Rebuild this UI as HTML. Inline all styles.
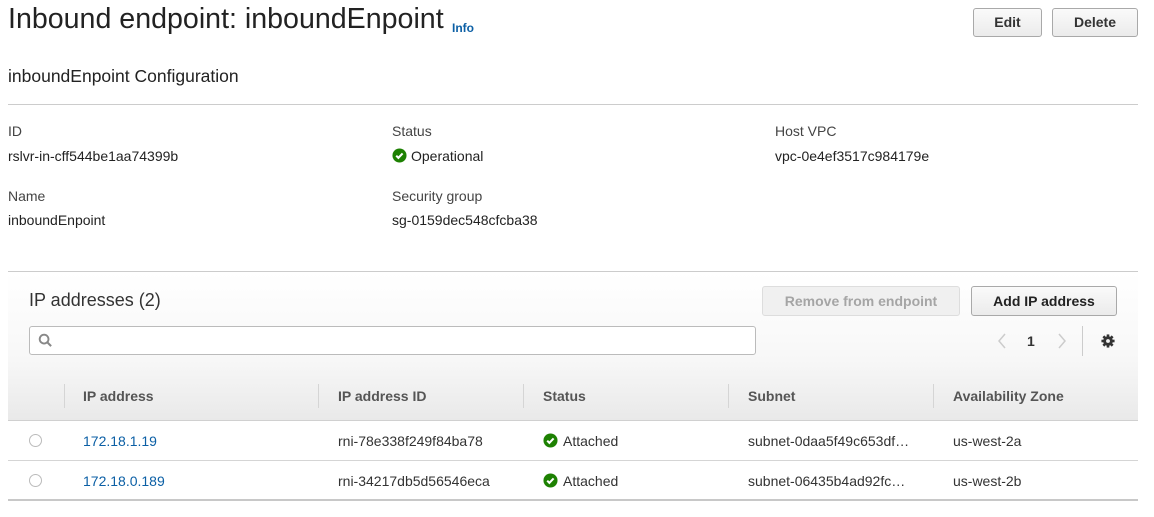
<!DOCTYPE html>
<html><head><style>
*{box-sizing:border-box;margin:0;padding:0}
body{width:1154px;height:517px;background:#fff;font-family:"Liberation Sans",Arial,sans-serif;color:#16191f;position:relative;overflow:hidden}
.a{position:absolute;white-space:nowrap}
.btn{position:absolute;border:1px solid #a9a9a9;border-radius:3px;background:linear-gradient(#fafafa,#ebebeb);font-weight:bold;font-size:14px;color:#333;text-align:center}
.lbl{font-size:14px;color:#444}
.val{font-size:14px;color:#222}
.th{font-size:14px;font-weight:bold;color:#555;top:388px}
.sep{position:absolute;top:384px;width:1px;height:24px;background:#d5d5d5}
.td{font-size:14px;color:#333}
.td.lnk{color:#0b5fa5}
.radio{position:absolute;width:13px;height:13px;border:1px solid #bbb;border-radius:50%;background:#fff}
</style></head><body>
<div class="a" style="left:8px;top:3px;font-size:28.6px;color:#222">Inbound endpoint: inboundEnpoint</div>
<div class="a" style="left:452px;top:21px;font-size:12px;font-weight:bold;color:#0b5fa5">Info</div>
<div class="btn" style="left:973px;top:8px;width:69px;height:29px;line-height:27px">Edit</div>
<div class="btn" style="left:1052px;top:8px;width:86px;height:29px;line-height:27px">Delete</div>
<div class="a" style="left:8px;top:66px;font-size:17.5px;color:#222">inboundEnpoint Configuration</div>
<div class="a" style="left:8px;top:104px;width:1130px;height:1px;background:#ccc"></div>
<div class="a lbl" style="left:8px;top:123px">ID</div>
<div class="a val" style="left:8px;top:148px">rslvr-in-cff544be1aa74399b</div>
<div class="a lbl" style="left:392px;top:123px">Status</div>
<svg class="a" style="left:392px;top:148px" width="15" height="15" viewBox="0 0 16 16"><circle cx="8" cy="8" r="7.5" fill="#1d8102"/><path d="M4.5 8.2l2.3 2.3 4.5-4.7" stroke="#fff" stroke-width="2.2" fill="none"/></svg>
<div class="a val" style="left:411px;top:148px">Operational</div>
<div class="a lbl" style="left:775px;top:123px">Host VPC</div>
<div class="a val" style="left:775px;top:148px">vpc-0e4ef3517c984179e</div>
<div class="a lbl" style="left:8px;top:188px">Name</div>
<div class="a val" style="left:8px;top:212px">inboundEnpoint</div>
<div class="a lbl" style="left:392px;top:188px">Security group</div>
<div class="a val" style="left:392px;top:212px">sg-0159dec548cfcba38</div>

<div class="a" style="left:8px;top:271px;width:1130px;height:150px;border-top:1px solid #ccc;background:linear-gradient(#fff 0%,#f7f7f7 60%,#e9e9e9 100%);border-bottom:1px solid #d0d0d0"></div>
<div class="a" style="left:29px;top:290px;font-size:18px;color:#333">IP addresses (2)</div>
<div class="btn" style="left:762px;top:286px;width:198px;height:30px;line-height:28px;color:#a5a5a5;border-color:#ddd;background:#f0f0f0">Remove from endpoint</div>
<div class="btn" style="left:971px;top:286px;width:146px;height:30px;line-height:28px;color:#222">Add IP address</div>
<div class="a" style="left:29px;top:326px;width:727px;height:29px;border:1px solid #bbb;border-radius:3px;background:#fff"></div>
<svg class="a" style="left:38px;top:333px" width="15" height="15" viewBox="0 0 16 16"><circle cx="6.5" cy="6.5" r="4.7" stroke="#888" stroke-width="2" fill="none"/><path d="M10 10l4 4" stroke="#888" stroke-width="2.2"/></svg>
<svg class="a" style="left:997px;top:333px" width="10" height="16" viewBox="0 0 10 16"><path d="M8 1L2 8l6 7" stroke="#ccc" stroke-width="1.5" fill="none"/></svg>
<div class="a" style="left:1027px;top:333px;font-size:14px;font-weight:bold;color:#333">1</div>
<svg class="a" style="left:1057px;top:333px" width="10" height="16" viewBox="0 0 10 16"><path d="M2 1l6 7-6 7" stroke="#ccc" stroke-width="1.5" fill="none"/></svg>
<div class="a" style="left:1082px;top:326px;width:1px;height:30px;background:#ccc"></div>
<svg class="a" style="left:1101px;top:334px" width="14" height="14" viewBox="0 0 16 16"><g fill="#333"><circle cx="8" cy="8" r="5.5"/><rect x="6.5" y="0.5" width="3" height="15"/><rect x="0.5" y="6.5" width="15" height="3"/><rect x="6.5" y="0.5" width="3" height="15" transform="rotate(45 8 8)"/><rect x="6.5" y="0.5" width="3" height="15" transform="rotate(-45 8 8)"/></g><circle cx="8" cy="8" r="2.2" fill="#f4f4f4"/></svg>

<div class="sep" style="left:64px"></div><div class="sep" style="left:318px"></div><div class="sep" style="left:523px"></div><div class="sep" style="left:728px"></div><div class="sep" style="left:933px"></div>
<div class="a th" style="left:83px">IP address</div>
<div class="a th" style="left:338px">IP address ID</div>
<div class="a th" style="left:543px">Status</div>
<div class="a th" style="left:748px">Subnet</div>
<div class="a th" style="left:953px">Availability Zone</div>

<div class="radio" style="left:29px;top:434px"></div>
<div class="a td lnk" style="left:83px;top:433px">172.18.1.19</div>
<div class="a td" style="left:338px;top:433px">rni-78e338f249f84ba78</div>
<svg class="a" style="left:543px;top:433px" width="15" height="15" viewBox="0 0 16 16"><circle cx="8" cy="8" r="7.5" fill="#1d8102"/><path d="M4.5 8.2l2.3 2.3 4.5-4.7" stroke="#fff" stroke-width="2.2" fill="none"/></svg>
<div class="a td" style="left:563px;top:433px">Attached</div>
<div class="a td" style="left:748px;top:433px">subnet-0daa5f49c653df…</div>
<div class="a td" style="left:953px;top:433px">us-west-2a</div>
<div class="a" style="left:8px;top:460px;width:1130px;height:1px;background:#d5d5d5"></div>
<div class="radio" style="left:29px;top:474px"></div>
<div class="a td lnk" style="left:83px;top:473px">172.18.0.189</div>
<div class="a td" style="left:338px;top:473px">rni-34217db5d56546eca</div>
<svg class="a" style="left:543px;top:473px" width="15" height="15" viewBox="0 0 16 16"><circle cx="8" cy="8" r="7.5" fill="#1d8102"/><path d="M4.5 8.2l2.3 2.3 4.5-4.7" stroke="#fff" stroke-width="2.2" fill="none"/></svg>
<div class="a td" style="left:563px;top:473px">Attached</div>
<div class="a td" style="left:748px;top:473px">subnet-06435b4ad92fc…</div>
<div class="a td" style="left:953px;top:473px">us-west-2b</div>
<div class="a" style="left:8px;top:499px;width:1130px;height:2px;background:#c8c8c8"></div>
</body></html>
